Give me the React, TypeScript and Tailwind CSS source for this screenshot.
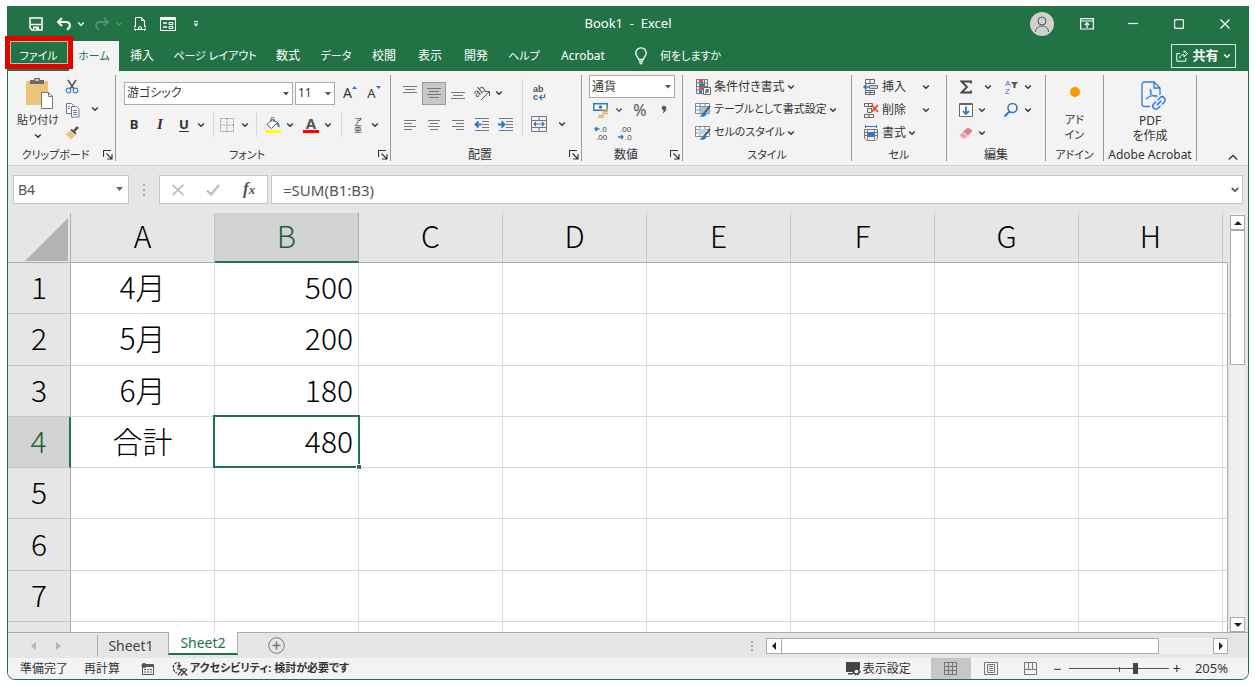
import type { ReactNode } from "react";

const tabs = [
  { label: "挿入", width: "w-[46px]" },
  { label: "ページ レイアウト", width: "w-[100px]", kana: true },
  { label: "数式", width: "w-[46px]" },
  { label: "データ", width: "w-[50px]", kana: true },
  { label: "校閲", width: "w-[46px]" },
  { label: "表示", width: "w-[46px]" },
  { label: "開発", width: "w-[46px]" },
  { label: "ヘルプ", width: "w-[50px]", kana: true },
  { label: "Acrobat", width: "w-[68px]" },
];

const columns = ["A", "B", "C", "D", "E", "F", "G", "H"];

const rows = [
  { a: "4月", b: "500" },
  { a: "5月", b: "200" },
  { a: "6月", b: "180" },
  { a: "合計", b: "480" },
  { a: "", b: "" },
  { a: "", b: "" },
  { a: "", b: "" },
];

function Svg({ w, h, children, className = "" }: { w: number; h: number; children: ReactNode; className?: string }) {
  return (
    <svg
      width={w}
      height={h}
      viewBox={`0 0 ${w} ${h}`}
      fill="none"
      stroke="currentColor"
      aria-hidden="true"
      className={`block shrink-0 font-['Liberation_Sans',sans-serif] ${className}`}
    >
      {children}
    </svg>
  );
}

function Btn({ label, className = "w-6", children }: { label: string; className?: string; children: ReactNode }) {
  return (
    <button type="button" aria-label={label} className={`flex h-[23px] shrink-0 items-center justify-center ${className}`}>
      {children}
    </button>
  );
}

function ChevronIcon() {
  return (
    <Svg w={8} h={6}>
      <path d="M1.2 1.5 4 4.2 6.8 1.5" strokeWidth="1.4" />
    </Svg>
  );
}

function Chevron({ className = "" }: { className?: string }) {
  return (
    <Btn label="その他のオプション" className={`w-2.5 ${className}`}>
      <ChevronIcon />
    </Btn>
  );
}

function Divider({ className = "h-6" }: { className?: string }) {
  return <span className={`w-px shrink-0 bg-[#d5d5d5] ${className}`} />;
}

function Combo({ label, value, className }: { label: string; value: string; className: string }) {
  return (
    <div className={`relative shrink-0 ${className}`}>
      <select
        aria-label={label}
        className="block h-[23px] w-full appearance-none border border-[#ababab] bg-white pl-0.5 text-xs text-[#333]"
      >
        <option>{value}</option>
      </select>
      <svg width="6" height="4" className="pointer-events-none absolute top-2.5 right-1 fill-[#555]" aria-hidden="true">
        <path d="M0 0h6L3 3.5z" />
      </svg>
    </div>
  );
}

function Group({
  title,
  width,
  launcher = false,
  kana = false,
  children,
}: {
  title: string;
  width: string;
  launcher?: boolean;
  kana?: boolean;
  children: ReactNode;
}) {
  return (
    <section aria-label={title} className={`my-1 flex shrink-0 flex-col border-r border-[#999] ${width}`}>
      <div className="flex h-[74px] items-start">{children}</div>
      <div className="flex h-3 items-center">
        <span className={`flex-1 text-center whitespace-nowrap ${kana ? "text-[11px]" : "text-xs"}`}>{title}</span>
        {launcher && (
          <button type="button" aria-label={`${title}の設定`} className="mr-0.5">
            <Svg w={10} h={10}>
              <path d="M.5 7V.5H8M3.5 3.5l5 5M9 4v5H4" strokeWidth="1.1" />
            </Svg>
          </button>
        )}
      </div>
    </section>
  );
}

function TextCommand({
  label,
  icon,
  kana = false,
  chevron = "",
}: {
  label: string;
  icon: ReactNode;
  kana?: boolean;
  chevron?: string;
}) {
  return (
    <button type="button" className="flex h-[23px] items-center whitespace-nowrap">
      {icon}
      <span className={`ml-[3px] ${kana ? "text-[11px]" : "text-xs"}`}>{label}</span>
      <span className={`ml-0.5 ${chevron}`}>
        <ChevronIcon />
      </span>
    </button>
  );
}

function AlignIcon({ lines, y = 0 }: { lines: [number, number][]; y?: number }) {
  return (
    <Svg w={16} h={16}>
      {lines.map(([x1, x2], i) => (
        <path key={i} d={`M${x1} ${y + i * 3 + 0.5}H${x2}`} stroke="#777" />
      ))}
    </Svg>
  );
}

function IndentIcon({ outdent = false }: { outdent?: boolean }) {
  return (
    <Svg w={16} h={14}>
      <path d="M1 .5h14M8 3.5h7M8 6.5h7M8 9.5h7M1 12.5h14" stroke="#777" />
      <path
        d={outdent ? "M7.5 6.5H2M4.5 3.5l-3 3 3 3" : "M0 6.5h6M3.5 3.5l3 3-3 3"}
        stroke="#2f78bd"
        strokeWidth="1.8"
      />
    </Svg>
  );
}

function TableStyleIcon({ cell = false }: { cell?: boolean }) {
  return (
    <Svg w={16} h={16}>
      <path d="M.5 1.5h14v10H.5zM.5 4.5h14M.5 8h14M5 1.5v10M10 1.5v10" fill="#fff" stroke="#888" />
      <path d={cell ? "M3.5 4h7v5h-7z" : "M5.5 5h9v6h-9z"} fill={cell ? "#b9d3ec" : "#9fc3e6"} stroke="none" />
      <path d="m15 4-5.500 7" stroke="#555" strokeWidth="2" />
      <path d="M9.800 9.500c1.400.5 2 1.800 1.200 3.500-.8 1.500-3.500 2.200-6.500 1.500C7 13.500 7 10.500 9.800 9.500z" fill="#2f78bd" stroke="none" />
    </Svg>
  );
}

function TitleBar() {
  return (
    <header className="flex h-[35px] items-center bg-[#217346] text-white">
      <div className="flex flex-1 items-center">
        <Btn label="上書き保存" className="ml-4 w-6">
          <Svg w={14} h={14}>
            <path d="M1 1h12v12H3l-2-2z" strokeWidth="1.500" />
            <path d="M2 7.500h10" strokeWidth="1.500" />
            <path d="M4 9.500h6V13H4z" fill="currentColor" stroke="none" />
            <path d="M6 11v2" stroke="#217346" strokeWidth="1.300" />
          </Svg>
        </Btn>
        <Btn label="元に戻す" className="ml-1 w-6">
          <Svg w={16} h={14}>
            <path d="M2 5h8c5 0 5 5.500 1 7.500M6 1 2 5l4 4" strokeWidth="2" />
          </Svg>
        </Btn>
        <Chevron />
        <Btn label="やり直し" className="ml-1 w-6 text-[#4f9270]">
          <Svg w={16} h={14}>
            <path d="M14 5H6C1 5 1 10.500 5 12.500M10 1l4 4-4 4" strokeWidth="1.800" />
          </Svg>
        </Btn>
        <Chevron className="text-[#4f9270]" />
        <Btn label="印刷プレビュー" className="ml-1 w-6">
          <Svg w={14} h={16}>
            <path d="M2.500 10V1.500h6l3 3V10M8.500 1.500v3h3M2.500 14.500v-1h9v1" />
            <path d="M1 10.500h2M11 10.500h2M1 13.500h2M11 13.500h2" strokeWidth="1.500" />
            <circle cx="7" cy="12" r="1.500" />
          </Svg>
        </Btn>
        <Btn label="フォーム" className="ml-1 w-6">
          <Svg w={16} h={14}>
            <path d="M.5.5h15v13H.5z" />
            <path d="M1 2h14" strokeWidth="2" />
            <path d="M3 6h4M3 10h4" strokeWidth="1.300" />
            <path d="M9 5.500h4v2H9zM9 9.500h4v2H9z" />
          </Svg>
        </Btn>
        <Btn label="クイック アクセス ツール バーのユーザー設定" className="ml-1 w-6">
          <Svg w={6} h={6}>
            <path d="M1 .5h4" />
            <path d="M.5 2.500h5L3 5.500z" fill="currentColor" stroke="none" />
          </Svg>
        </Btn>
      </div>
      <h1 className="text-[13px] whitespace-pre">Book1{"  "}-{"  "}Excel</h1>
      <div className="flex flex-1 items-center justify-end">
        <button type="button" aria-label="アカウント" className="mr-2.5 grid size-6 place-items-center rounded-full bg-[#d0d0d0] text-[#555]">
          <Svg w={16} h={18}>
            <circle cx="8" cy="6" r="4" />
            <path d="M1.500 17c0-8 13-8 13 0" />
          </Svg>
        </button>
        <Btn label="リボンの表示オプション" className="w-[46px]">
          <Svg w={14} h={12}>
            <path d="M.6.6h12.800v10.400H.6zM.6 3h12.800M7 10V5M4.800 7 7 4.800 9.200 7" strokeWidth="1.200" />
          </Svg>
        </Btn>
        <Btn label="最小化" className="w-[46px]">
          <Svg w={10} h={10}>
            <path d="M0 4.500h10" strokeWidth="1.200" />
          </Svg>
        </Btn>
        <Btn label="最大化" className="w-[46px]">
          <Svg w={10} h={10}>
            <rect x=".6" y=".6" width="8.800" height="8.800" rx="1" strokeWidth="1.200" />
          </Svg>
        </Btn>
        <Btn label="閉じる" className="w-[46px]">
          <Svg w={10} h={10}>
            <path d="m.5.5 9 9m0-9-9 9" strokeWidth="1.200" />
          </Svg>
        </Btn>
      </div>
    </header>
  );
}

function TabBar() {
  return (
    <nav className="flex h-[30px] items-stretch bg-[#217346] whitespace-nowrap text-white">
      <button type="button" className="relative w-[61px] shrink-0 text-[11px]">
        ファイル
        <span className="absolute -top-[5px] -right-1 -left-[3px] h-[33px] border-[5px] border-[#e60000] ring-1 ring-[#c9c0a4] ring-inset" />
      </button>
      <button type="button" className="w-[50px] shrink-0 bg-[#f3f3f3] text-[11px] text-[#217346]">
        ホーム
      </button>
      {tabs.map((tab) => (
        <button key={tab.label} type="button" className={`shrink-0 ${tab.width} ${tab.kana ? "text-[11px]" : "text-xs"}`}>
          {tab.label}
        </button>
      ))}
      <button type="button" className="ml-[17px] flex items-center gap-3 text-[11px]">
        <Svg w={14} h={18}>
          <path d="M4.500 12.500C4.500 10 1.800 9.500 1.800 6a5.200 5.200 0 0 1 10.400 0c0 3.500-2.700 4-2.700 6.500zM5 14.500h4M5.500 16.500h3" strokeWidth="1.300" />
        </Svg>
        何をしますか
      </button>
      <button
        type="button"
        className="my-[3px] mr-3 ml-auto flex w-[65px] items-center justify-center gap-1 border border-[#d5e6dc] text-[13px] font-bold"
      >
        <Svg w={12} h={12}>
          <path d="M4 3.500H.8v7.700h9V8M3.500 8.500C4 5.500 6 4.500 8 4.500V7l3.500-3.500L8 .8v2" />
        </Svg>
        共有
        <ChevronIcon />
      </button>
    </nav>
  );
}

function Ribbon() {
  return (
    <div className="flex h-[94px] bg-[#f3f3f3] text-[#333]">
      <Group title="クリップボード" width="w-[108px]" launcher kana>
        <button type="button" className="ml-2 flex w-11 flex-col items-center whitespace-nowrap">
          <Svg w={28} h={32} className="mt-[3px] ml-1">
            <path d="M0 3h22v24H0z" fill="#ecc37c" stroke="none" />
            <path d="M4 6V2h4a3 3 0 0 1 6 0h4v4z" fill="#6b6b6b" stroke="none" />
            <path d="M9.500 2h3" stroke="#f3f3f3" strokeWidth="1.500" />
            <path d="M15.500 14.500h7l4 4v12h-11z" fill="#fff" stroke="#777" />
            <path d="M22.500 14.500v4h4" stroke="#777" />
          </Svg>
          <span className="mt-px text-[11px] leading-[18px]">貼り付け</span>
          <span className="mt-1">
            <ChevronIcon />
          </span>
        </button>
        <div className="ml-0.5 flex flex-col">
          <Btn label="切り取り" className="w-5">
            <Svg w={14} h={15}>
              <path d="m3 1 6 9M11 1 5 10" stroke="#555" strokeWidth="1.500" />
              <circle cx="3.500" cy="11.500" r="2.300" stroke="#4a84c4" strokeWidth="1.200" />
              <circle cx="10.500" cy="11.500" r="2.300" stroke="#4a84c4" strokeWidth="1.200" />
            </Svg>
          </Btn>
          <Btn label="コピー" className="w-5">
            <Svg w={15} h={16}>
              <path d="M1.500 1.500h5l2 2v8h-7z" fill="#fff" stroke="#777" />
              <path d="M6.500 4.500h5l2.500 2.500v8H6.500z" fill="#fff" stroke="#777" />
              <path d="M3 4.500h2M3 6.500h2M8 8.500h4M8 10.500h4M8 12.500h4" stroke="#4a84c4" />
            </Svg>
          </Btn>
          <Btn label="書式のコピー/貼り付け" className="w-5">
            <Svg w={14} h={14}>
              <path d="m13 1-4 4" stroke="#555" strokeWidth="2.500" />
              <path d="m6 3.500 5 4.500" stroke="#555" strokeWidth="2" />
              <path d="M5 5 .5 8 6 13.500 10 9.500z" fill="#ecc37c" stroke="none" />
            </Svg>
          </Btn>
        </div>
        <Chevron className="mt-[22px] ml-2" />
      </Group>

      <Group title="フォント" width="w-[275px]" launcher kana>
        <div className="flex flex-col gap-2 pt-[6px] pl-2">
          <div className="flex h-6 items-center">
            <Combo label="フォント名" value="游ゴシック" className="w-[169px]" />
            <Combo label="フォント サイズ" value="11" className="ml-0.5 w-10" />
            <Btn label="フォント サイズの拡大" className="ml-[3px] w-6">
              <span className="text-sm leading-4">A</span>
              <Svg w={5} h={14}>
                <path d="M0 3 2.500 0 5 3z" fill="#2f78bd" stroke="none" />
              </Svg>
            </Btn>
            <Btn label="フォント サイズの縮小">
              <span className="text-[13px] leading-4">A</span>
              <Svg w={5} h={14}>
                <path d="M0 0h5L2.500 3z" fill="#2f78bd" stroke="none" />
              </Svg>
            </Btn>
          </div>
          <div className="flex h-6 items-center">
            <Btn label="太字" className="w-5">
              <b className="text-[13px]">B</b>
            </Btn>
            <Btn label="斜体" className="ml-1 w-6">
              <i className="font-['Liberation_Serif',serif] text-[15px] font-bold">I</i>
            </Btn>
            <Btn label="下線">
              <span className="text-[13px] font-bold underline underline-offset-2">U</span>
            </Btn>
            <Chevron />
            <Divider className="mr-1 ml-[7px] h-6" />
            <Btn label="罫線" className="w-[18px]">
              <Svg w={14} h={14}>
                <path d="M.5.5h13v13H.5zM7 0v14M0 7h14" stroke="#999" strokeDasharray="2 1" />
              </Svg>
            </Btn>
            <Chevron className="ml-1" />
            <Divider className="mr-1 ml-1.5 h-6" />
            <Btn label="塗りつぶしの色">
              <Svg w={16} h={16}>
                <path d="M0 13h16v3H0z" fill="#ffff00" stroke="none" />
                <path d="m7 2.500-5 5 4.500 4 6-6zM6 5V1.500c0-1.500 3-1.500 3 0V5" fill="#fff" stroke="#555" />
                <path d="M12 5c2 .5 2.800 2.500 2.500 5.500C12.500 10 11.500 7.500 12 5z" fill="#2f78bd" stroke="none" />
              </Svg>
            </Btn>
            <Chevron />
            <Btn label="フォントの色" className="ml-1 w-6">
              <span className="flex flex-col items-center text-[15px] leading-[13px] font-bold text-[#555]">
                A
                <span className="h-[3px] w-4 bg-[#ff0000]" />
              </span>
            </Btn>
            <Chevron />
            <Divider className="mr-1.5 ml-2 h-6" />
            <Btn label="ふりがなの表示/非表示" className="w-5">
              <span className="flex flex-col text-[8px] leading-[8px]">
                <span>ア</span>
                <span>亜</span>
              </span>
            </Btn>
            <Chevron className="ml-0.5" />
          </div>
        </div>
      </Group>

      <Group title="配置" width="w-[191px]" launcher>
        <div className="flex flex-col gap-2 pt-[6px] pl-[7px]">
          <div className="flex h-6 items-center">
            <Btn label="上揃え">
              <AlignIcon lines={[[1, 15], [3, 13], [1, 15]]} y={1} />
            </Btn>
            <Btn label="上下中央揃え" className="w-6 border border-[#999] bg-[#c8c8c8]">
              <AlignIcon lines={[[1, 15], [3, 13], [1, 15], [3, 13]]} y={3} />
            </Btn>
            <Btn label="下揃え">
              <AlignIcon lines={[[1, 15], [3, 13], [1, 15]]} y={7} />
            </Btn>
            <Btn label="方向">
              <Svg w={18} h={18}>
                <text x="1" y="12" fontSize="11" fill="#555" stroke="none" transform="rotate(-40 5 9)">
                  ab
                </text>
                <path d="m8 16 8-8M12 7.500h4.500V12" stroke="#555" />
              </Svg>
            </Btn>
            <Chevron />
          </div>
          <div className="flex h-6 items-center">
            <Btn label="左揃え">
              <AlignIcon lines={[[2, 14], [2, 10], [2, 14], [2, 10]]} y={3} />
            </Btn>
            <Btn label="中央揃え">
              <AlignIcon lines={[[2, 14], [4, 12], [2, 14], [4, 12]]} y={3} />
            </Btn>
            <Btn label="右揃え">
              <AlignIcon lines={[[2, 14], [6, 14], [2, 14], [6, 14]]} y={3} />
            </Btn>
            <Btn label="インデントを減らす">
              <IndentIcon outdent />
            </Btn>
            <Btn label="インデントを増やす">
              <IndentIcon />
            </Btn>
          </div>
        </div>
        <Divider className="mt-1 ml-1 h-14" />
        <div className="flex flex-col gap-2 pt-[6px] pl-1">
          <Btn label="折り返して全体を表示する">
            <Svg w={14} h={18}>
              <text x="1" y="8" fontSize="9" fontWeight="bold" fill="#555" stroke="none">
                ab
              </text>
              <text x="1" y="16" fontSize="9" fontWeight="bold" fill="#555" stroke="none">
                c
              </text>
              <path d="M12.500 10v3.500H8M10 11l-2.500 2.500L10 16" stroke="#2f78bd" strokeWidth="1.200" />
            </Svg>
          </Btn>
          <div className="flex">
            <Btn label="セルを結合して中央揃え">
              <Svg w={16} h={16}>
                <path d="M.5.5h15v15H.5zM.5 4.500h15M.5 11.500h15M8 .5v4M8 11.500v4" stroke="#777" />
                <path d="M3 8h10M5 6 3 8l2 2M11 6l2 2-2 2" stroke="#2f78bd" strokeWidth="1.200" />
              </Svg>
            </Btn>
            <Chevron className="ml-1.5" />
          </div>
        </div>
      </Group>

      <Group title="数値" width="w-[101px]" launcher>
        <div className="flex flex-col pl-[7px]">
          <Combo label="表示形式" value="通貨" className="w-[86px]" />
          <div className="flex items-center text-[#555]">
            <Btn label="通貨表示形式">
              <Svg w={16} h={16}>
                <path d="M.8 1.800h13.400v6.400H.8z" fill="#fff" stroke="#2f78bd" strokeWidth="1.500" />
                <circle cx="7.500" cy="5" r="1.800" fill="#2f78bd" stroke="none" />
                <path d="M9 7.500h6M9 9.500h6M9 11.500h6M5 13.500h6M5 15.500h6" stroke="#e5b566" strokeWidth="1.300" />
              </Svg>
            </Btn>
            <Chevron className="ml-px" />
            <Btn label="パーセント スタイル" className="ml-1 w-6">
              <span className="text-base">%</span>
            </Btn>
            <Btn label="桁区切りスタイル">
              <Svg w={6} h={9}>
                <path d="M3 1a2 2 0 0 1 2 2c0 2-1 4-3 5 .5-1 .9-1.800.9-3A2 2 0 0 1 3 1z" fill="currentColor" strokeWidth=".5" />
              </Svg>
            </Btn>
          </div>
          <div className="flex items-center">
            <Btn label="小数点以下の表示桁数を増やす">
              <Svg w={16} h={18}>
                <text x="7" y="8" fontSize="8" fill="#444" stroke="none">.0</text>
                <text x="3" y="16" fontSize="8" fill="#444" stroke="none">.00</text>
                <path d="M6.500 5H2M4 3 2 5l2 2" stroke="#2f78bd" strokeWidth="1.300" />
              </Svg>
            </Btn>
            <Btn label="小数点以下の表示桁数を減らす">
              <Svg w={16} h={18}>
                <text x="3" y="8" fontSize="8" fill="#444" stroke="none">.00</text>
                <text x="8" y="16" fontSize="8" fill="#444" stroke="none">.0</text>
                <path d="M1 13h5M4 11l2 2-2 2" stroke="#2f78bd" strokeWidth="1.300" />
              </Svg>
            </Btn>
          </div>
        </div>
      </Group>

      <Group title="スタイル" width="w-[169px]" kana>
        <div className="flex flex-col items-start pl-3">
          <TextCommand
            label="条件付き書式"
            icon={
              <Svg w={16} h={16}>
                <path d="M1.500.5h11v14h-11zM1.500 4h11M1.500 7.500h11M1.500 11h11M9.500.5v14" stroke="#777" />
                <path d="M4 1h4v3H4zM4 8h4v3H4z" fill="#d9533f" stroke="none" />
                <path d="M4 4.500h6v3H4zM4 11.500h3v3H4z" fill="#2f78bd" stroke="none" />
                <path d="M8.500 8.500h7v7h-7z" fill="#fff" stroke="#666" />
                <path d="M10 11h4M10 13h4M13.300 9.800l-2.500 4.500" stroke="#444" />
              </Svg>
            }
          />
          <TextCommand label="テーブルとして書式設定" icon={<TableStyleIcon />} kana />
          <TextCommand label="セルのスタイル" icon={<TableStyleIcon cell />} kana />
        </div>
      </Group>

      <Group title="セル" width="w-[95px]" kana>
        <div className="flex flex-col items-start pl-[11px]">
          <TextCommand
            label="挿入"
            chevron="pl-3.5"
            icon={
              <Svg w={16} h={16}>
                <path d="M2.500.5h9v4h-9zM7 .5v4M2.500 11.500h9v4h-9zM7 11.500v4M2.500 13.500h9" stroke="#666" />
                <path d="M6.500 6.500h8v3h-8z" fill="#b9d3ec" stroke="#777" />
                <path d="M7 8H1M3.500 5.500 1 8l2.500 2.500" stroke="#2f78bd" strokeWidth="1.500" />
              </Svg>
            }
          />
          <TextCommand
            label="削除"
            chevron="pl-3.5"
            icon={
              <Svg w={16} h={16}>
                <path d="M1.500 1.500h8v3h-8zM5.500 1.500v3M4.500 6.500h4v4h-4zM1.500 12.500h9v3h-9zM6 12.500v3" stroke="#666" />
                <path d="m8.500 3 6.500 7m0-7-6.500 7" stroke="#e0442e" strokeWidth="1.800" />
              </Svg>
            }
          />
          <TextCommand
            label="書式"
            icon={
              <Svg w={16} h={16}>
                <path d="M2 1.500h12M2.500 0v3M13.500 0v3" stroke="#2f78bd" />
                <path d="M1.500 4.500h13v9l-2 2h-9l-2-2zM1.500 7.500h13M1.500 10.500h13M4.500 4.500v10M11.500 4.500v10" stroke="#777" />
                <path d="M5 7h6v5H5z" fill="#2f78bd" stroke="none" />
              </Svg>
            }
          />
        </div>
      </Group>

      <Group title="編集" width="w-[99px]">
        <div className="flex flex-col pl-2">
          <div className="flex items-center">
            <Btn label="オート SUM" className="w-[22px]">
              <Svg w={12} h={14}>
                <path d="M11 3.500V1.500H1.500L7 7l-5.500 5.500H11v-2" stroke="#444" strokeWidth="1.800" />
              </Svg>
            </Btn>
            <Chevron className="ml-1.5" />
            <Btn label="並べ替えとフィルター" className="ml-1.5 w-6">
              <Svg w={16} h={18}>
                <text x="2" y="8" fontSize="8" fill="#2f78bd" stroke="none">A</text>
                <text x="2" y="16" fontSize="8" fill="#8a4bb0" stroke="none">Z</text>
                <path d="M8 4h7l-2.500 3v3h-2V7z" fill="#555" stroke="none" />
              </Svg>
            </Btn>
            <Chevron />
          </div>
          <div className="flex items-center">
            <Btn label="フィル" className="w-[22px]">
              <Svg w={14} h={14}>
                <path d="M.5.5h13v13H.5z" fill="#fff" stroke="#666" />
                <path d="M.5 1.500h13" stroke="#666" />
                <path d="M7 3.500V11M4 8l3 3 3-3" stroke="#2f78bd" strokeWidth="1.800" />
              </Svg>
            </Btn>
            <Chevron />
            <Btn label="検索と選択" className="ml-3 w-6">
              <Svg w={16} h={16}>
                <circle cx="9.500" cy="6" r="4.500" stroke="#2f78bd" strokeWidth="1.600" />
                <path d="m6.500 9.500-5 5" stroke="#2f78bd" strokeWidth="2" />
              </Svg>
            </Btn>
            <Chevron />
          </div>
          <div className="flex items-center">
            <Btn label="クリア" className="w-[22px]">
              <Svg w={14} h={12}>
                <path d="M9 .5 13.500 4 9 8.500 4 4.500z" fill="#e8798c" stroke="none" />
                <path d="m3.500 5 5 4-2 2.500H4L.5 8.500z" fill="#f0a0ad" stroke="none" />
              </Svg>
            </Btn>
            <Chevron />
          </div>
        </div>
      </Group>

      <Group title="アドイン" width="w-[58px]" kana>
        <button type="button" className="flex w-full flex-col items-center text-[11px] leading-[15px]">
          <span className="mt-3 mb-[15px] size-2.5 rounded-full bg-[#ff9500]" />
          <span>アド</span>
          <span>イン</span>
        </button>
      </Group>

      <Group title="Adobe Acrobat" width="w-[93px]">
        <button type="button" className="flex w-full flex-col items-center leading-[15px]">
          <Svg w={28} h={30} className="mt-1.5 mb-0.5 ml-2 text-[#2f7be0]">
            <path d="M10 25.500H4.500A2.500 2.500 0 0 1 2 23V3.500A2.500 2.500 0 0 1 4.500 1H14l6 6v7M14 1v6h6" strokeWidth="1.300" />
            <path d="M6 18c4-1.500 5.500-5 5-9-.2-1.500-1.500-1-1 .8.8 3.500 3 6 6.500 6.200 1.500-.2 1-1.600-.5-1.500-4 0-6.500 1-9.500 2.500" />
            <g transform="rotate(-45 19 22)" strokeWidth="1.500">
              <path d="M18 25h-3.500a3 3 0 0 1 0-6H18M20 19h3.500a3 3 0 0 1 0 6H20M16 22h6" />
            </g>
          </Svg>
          <span>PDF</span>
          <span>を作成</span>
        </button>
      </Group>

      <button type="button" aria-label="リボンを折りたたむ" className="mr-2.5 mb-1 ml-auto self-end">
        <Svg w={10} h={7}>
          <path d="m.8 5.500 4.200-4 4.200 4" strokeWidth="1.300" />
        </Svg>
      </button>
    </div>
  );
}

function FormulaBar() {
  return (
    <div className="flex h-12 items-center border-t border-[#d2d2d2] bg-[#e6e6e6] px-[5px] text-[#555]">
      <div className="relative w-[116px] shrink-0">
        <input
          aria-label="名前ボックス"
          defaultValue="B4"
          className="block h-[29px] w-full border border-[#c6c6c6] bg-white pl-1 text-sm"
        />
        <svg width="7" height="4" className="pointer-events-none absolute top-3 right-1.5 fill-[#666]" aria-hidden="true">
          <path d="M0 0h7L3.500 4z" />
        </svg>
      </div>
      <Svg w={4} h={14} className="mx-[13px] text-[#aaa]">
        <path d="M2 1v2M2 6v2M2 11v2" strokeWidth="2" />
      </Svg>
      <div className="flex h-[29px] w-[109px] shrink-0 items-center justify-around border border-[#c6c6c6] bg-white">
        <Btn label="キャンセル">
          <Svg w={14} h={12} className="text-[#bbb]">
            <path d="m1.500.8 11 10.400m0-10.400-11 10.400" strokeWidth="1.600" />
          </Svg>
        </Btn>
        <Btn label="入力">
          <Svg w={14} h={12} className="text-[#bbb]">
            <path d="m1 6.500 4 4L13 1" strokeWidth="2.200" />
          </Svg>
        </Btn>
        <Btn label="関数の挿入">
          <i className="font-['Liberation_Serif',serif] text-[17px] font-bold">
            f<span className="text-[13px]">x</span>
          </i>
        </Btn>
      </div>
      <div className="relative ml-[3px] min-w-0 flex-1">
        <input
          aria-label="数式バー"
          defaultValue="=SUM(B1:B3)"
          className="block h-[29px] w-full border border-[#c6c6c6] bg-white pl-[11px] text-[15px]"
        />
        <svg width="8" height="6" className="pointer-events-none absolute top-3 right-1" fill="none" stroke="#666" strokeWidth="2" aria-hidden="true">
          <path d="M.8 1 4 4.200 7.200 1" />
        </svg>
      </div>
    </div>
  );
}

function Sheet() {
  return (
    <table className="h-full w-full table-fixed border-separate border-spacing-0 font-['Noto_Sans_CJK_JP',sans-serif] text-3xl leading-none font-light text-black">
      <colgroup>
        <col className="w-[63px]" />
        {columns.map((column) => (
          <col key={column} />
        ))}
        <col className="w-[5px]" />
      </colgroup>
      <thead>
        <tr className="h-[50px] bg-[#e6e6e6]">
          <td className="border-r border-b border-[#ababab] p-0">
            <svg viewBox="0 0 43 43" className="mt-1 mr-0.5 ml-auto block size-[43px] fill-[#b3b3b3]" aria-hidden="true">
              <path d="M43 0v43H0z" />
            </svg>
          </td>
          {columns.map((column) => (
            <th
              key={column}
              scope="col"
              className={
                column === "B"
                  ? "border-r border-b-2 border-r-[#ababab] border-b-[#217346] bg-[#d2d2d2] p-0 pb-1 font-light text-[#1f5f3c]"
                  : "border-r border-b border-r-[#c6c6c6] border-b-[#ababab] p-0 pb-[5px] font-light"
              }
            >
              {column}
            </th>
          ))}
          <td className="border-b border-[#ababab] p-0" />
        </tr>
      </thead>
      <tbody>
        {rows.map((row, i) => (
          <tr key={i}>
            <th
              scope="row"
              className={
                i === 3
                  ? "border-r-2 border-b border-r-[#217346] border-b-[#c6c6c6] bg-[#d2d2d2] p-0 pb-1 font-light text-[#1f5f3c]"
                  : "border-r border-b border-r-[#ababab] border-b-[#c6c6c6] bg-[#e6e6e6] p-0 pb-1 font-light"
              }
            >
              {i + 1}
            </th>
            <td className="border-r border-b border-[#d9d9d9] p-0 pb-1 text-center">{row.a}</td>
            <td className="relative border-r border-b border-[#d9d9d9] p-0 pr-[5px] pb-1 text-right">
              {row.b}
              {i === 3 && (
                <span className="absolute -inset-x-0.5 -top-0.5 -bottom-px border-2 border-[#217346]">
                  <span className="absolute -right-[3px] -bottom-[3px] size-[5px] border-t border-l border-white bg-[#217346]" />
                </span>
              )}
            </td>
            {columns.slice(2).map((column) => (
              <td key={column} className="border-r border-b border-[#d9d9d9] p-0" />
            ))}
            <td className="border-r border-b border-r-[#ababab] border-b-[#d9d9d9] p-0" />
          </tr>
        ))}
        <tr className="h-[10px]">
          <td className="border-r border-[#ababab] bg-[#e6e6e6] p-0" />
          {columns.map((column) => (
            <td key={column} className="border-r border-[#d9d9d9] p-0" />
          ))}
          <td className="border-r border-[#ababab] p-0" />
        </tr>
      </tbody>
    </table>
  );
}

function ScrollButton({ label, path, className }: { label: string; path: string; className: string }) {
  return (
    <button type="button" aria-label={label} className={`grid shrink-0 place-items-center border border-[#ababab] bg-white ${className}`}>
      <svg width="8" height="8" className="fill-[#222]" aria-hidden="true">
        <path d={path} />
      </svg>
    </button>
  );
}

function SheetTabs() {
  return (
    <div className="flex h-[26px] shrink-0 bg-[#e6e6e6] text-sm text-[#444]">
      <div className="flex w-[89px] items-center gap-[18px] border-t border-[#ababab] pl-[22px] text-[#b5b5b5]">
        <button type="button" aria-label="前のシート">
          <Svg w={7} h={8}>
            <path d="M6 0v8L1 4z" fill="currentColor" stroke="none" />
          </Svg>
        </button>
        <button type="button" aria-label="次のシート">
          <Svg w={7} h={8}>
            <path d="M1 0v8l5-4z" fill="currentColor" stroke="none" />
          </Svg>
        </button>
      </div>
      <div className="flex border-t border-[#ababab] py-0.5">
        <button type="button" className="w-[71px] border-l border-[#ababab] pr-1 leading-none">
          Sheet1
        </button>
      </div>
      <button type="button" className="mb-[3px] w-[70px] border-x border-b-2 border-x-[#ababab] border-b-[#217346] bg-white leading-none text-[#217346]">
        Sheet2
      </button>
      <div className="flex flex-1 items-center justify-between border-t border-[#ababab] pr-5 pl-[30px]">
        <button type="button" aria-label="新しいシート" className="text-[#777]">
          <Svg w={17} h={17}>
            <circle cx="8.500" cy="8.500" r="7.800" />
            <path d="M8.500 4.500v8M4.500 8.500h8" strokeWidth="1.600" />
          </Svg>
        </button>
        <div className="flex w-[478px] items-center">
          <Svg w={4} h={12} className="mr-3 text-[#aaa]">
            <path d="M2 1v2M2 5v2M2 9v2" strokeWidth="2" />
          </Svg>
          <div className="flex h-4 flex-1 bg-[#f0f0f0]">
            <ScrollButton label="左へスクロール" path="M6 0v8L2 4z" className="w-4" />
            <div className="mr-[54px] flex-1 border border-l-0 border-[#ababab] bg-white" />
            <ScrollButton label="右へスクロール" path="M2 0v8l4-4z" className="w-[15px]" />
          </div>
        </div>
      </div>
    </div>
  );
}

function StatusBar() {
  return (
    <footer className="flex h-[21px] shrink-0 items-center rounded-b-[7px] bg-[#f3f3f3] pl-3 whitespace-nowrap text-[#333]">
      <span className="w-16">準備完了</span>
      <span className="w-[57px]">再計算</span>
      <button type="button" aria-label="マクロの記録" className="mr-[18px] text-[#555]">
        <Svg w={13} h={12}>
          <path d="M1.500 3v8.500h11v-10H5" />
          <circle cx="3" cy="2.500" r="2.500" fill="currentColor" stroke="none" />
          <path d="M5 3h8" strokeWidth="2" />
          <path d="M3 6.500h8M3 9h8" strokeDasharray="2 1" />
        </Svg>
      </button>
      <button type="button" className="flex items-center gap-0.5 text-[11px] font-bold">
        <Svg w={16} h={15}>
          <path d="M5 1.500C0 3 0 10.500 5 12" strokeDasharray="3 1" strokeWidth="1.200" />
          <path d="M7 1v5L5.500 4.500M7 6l2-2M5 7.500l4 1 4-1M9 8.500v2L6 14" strokeWidth="1.200" />
          <path d="m9 8 6 6.500M15 8l-6 6.500" strokeWidth="1.200" />
        </Svg>
        アクセシビリティ: 検討が必要です
      </button>
      <button type="button" className="ml-auto flex items-center gap-0.5">
        <Svg w={15} h={14}>
          <path d="M0 0h14v7H9l-2 3H0zM2 11h5v1.500H2z" fill="#444" stroke="none" />
          <circle cx="10.500" cy="9.500" r="2.600" fill="#f3f3f3" stroke="#444" strokeWidth="1.500" />
          <circle cx="10.500" cy="9.500" r="3.600" stroke="#444" strokeDasharray="1.500 1.500" />
        </Svg>
        表示設定
      </button>
      <div className="ml-5 flex h-full text-[#777]">
        <button type="button" aria-label="標準" aria-pressed="true" className="grid w-10 place-items-center bg-[#c6c6c6]">
          <Svg w={13} h={13}>
            <path d="M.5.5h12v12H.5zM.5 4.500h12M.5 8.500h12M4.500.5v12M8.500.5v12" />
          </Svg>
        </button>
        <button type="button" aria-label="ページ レイアウト" className="grid w-10 place-items-center">
          <Svg w={14} h={13}>
            <path d="M.5.5h13v12H.5zM3.500 2.500h7v8h-7zM5 4.500h4M5 6.500h4M5 8.500h4" />
          </Svg>
        </button>
        <button type="button" aria-label="改ページ プレビュー" className="grid w-10 place-items-center">
          <Svg w={13} h={13}>
            <path d="M.5.5h12v12H.5zM4.500.5v7h4v-7M8.500 7.500h4M.5 7.500h4" />
          </Svg>
        </button>
      </div>
      <button type="button" aria-label="縮小" className="mr-1 w-3.5 text-sm">
        −
      </button>
      <div className="relative flex h-4 w-[100px] items-center">
        <input
          type="range"
          aria-label="ズーム"
          defaultValue={68}
          className="h-4 w-full appearance-none bg-transparent [&::-webkit-slider-runnable-track]:h-px [&::-webkit-slider-runnable-track]:bg-[#555] [&::-webkit-slider-thumb]:-mt-[5px] [&::-webkit-slider-thumb]:h-[11px] [&::-webkit-slider-thumb]:w-[5px] [&::-webkit-slider-thumb]:appearance-none [&::-webkit-slider-thumb]:bg-[#444]"
        />
        <span className="pointer-events-none absolute top-1.5 left-1/2 h-[5px] w-px bg-[#555]" />
      </div>
      <button type="button" aria-label="拡大" className="w-4 text-sm">
        +
      </button>
      <output className="mr-5 ml-2.5 text-[13px]">205%</output>
    </footer>
  );
}

export default function App() {
  return (
    <div className="h-screen min-h-[640px] bg-white px-[7px] pt-1.5 pb-2 font-['Noto_Sans','Noto_Sans_CJK_JP',sans-serif] text-xs [font-feature-settings:'palt']">
      <div className="flex h-full flex-col rounded-b-lg border-x border-b border-[#217346]">
        <div className="relative z-10 shrink-0">
          <TitleBar />
          <TabBar />
        </div>
        <div className="shrink-0">
          <Ribbon />
          <FormulaBar />
        </div>
        <main className="flex min-h-0 flex-1 bg-[#e6e6e6]">
          <div className="min-w-0 flex-1 bg-white">
            <Sheet />
          </div>
          <div className="mr-[3px] ml-0.5 flex w-[15px] shrink-0 flex-col bg-[#f0f0f0] pt-0.5">
            <ScrollButton label="上へスクロール" path="M0 6h8L4 2z" className="h-[15px]" />
            <div className="h-[135px] border border-[#ababab] bg-white" />
            <ScrollButton label="下へスクロール" path="M0 2h8L4 6z" className="mt-auto h-[15px]" />
          </div>
        </main>
        <SheetTabs />
        <StatusBar />
      </div>
    </div>
  );
}
